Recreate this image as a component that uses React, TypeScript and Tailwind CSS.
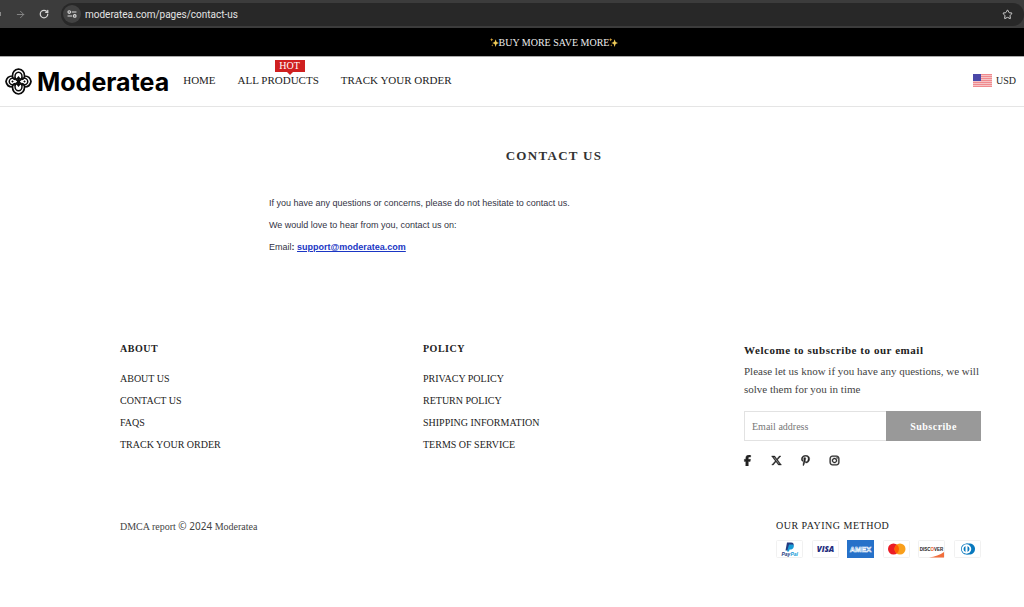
import React from 'react';
import { ArrowRight, RotateCw, Star } from 'lucide-react';
import { FaFacebookF, FaInstagram, FaPinterestP, FaXTwitter } from 'react-icons/fa6';

const aboutLinks = ['ABOUT US', 'CONTACT US', 'FAQS', 'TRACK YOUR ORDER'];
const policyLinks = ['PRIVACY POLICY', 'RETURN POLICY', 'SHIPPING INFORMATION', 'TERMS OF SERVICE'];

const socials = [
  { name: 'Facebook', icon: FaFacebookF },
  { name: 'X', icon: FaXTwitter },
  { name: 'Pinterest', icon: FaPinterestP },
  { name: 'Instagram', icon: FaInstagram },
];

const Sparkles = () => (
  <svg viewBox="0 0 16 16" className="h-[9px] w-[9px]" aria-hidden="true">
    <path d="M10 2l1.800 5L16 9l-4.200 1.800L10 16l-1.800-5.200L4 9l4.200-2z" fill="#f0cc58" />
    <path d="M3 0l.9 2.100L6 3l-2.100.9L3 6l-.9-2.100L0 3l2.100-.9z" fill="#e0a93b" />
    <path d="M4 11l.5 1.500L6 13l-1.500.5L4 15l-.5-1.500L2 13l1.500-.5z" fill="#e0a93b" />
  </svg>
);

const KnotLogo = () => (
  <svg viewBox="0 0 54 54" className="h-[27px] w-[27px]" fill="none" stroke="#0a0a0a" aria-hidden="true">
    <path
      d="M15 16C15 8 20 3 27 2c7 1 12 6 12 14 8 0 12 5 13 11-1 6-5 11-13 11 0 8-5 13-12 14-7-1-12-6-12-14C7 38 3 33 2 27c1-6 5-11 13-11z"
      strokeWidth="3.400"
    />
    <ellipse cx="27" cy="17" rx="7" ry="8.500" strokeWidth="3" />
    <ellipse cx="27" cy="37" rx="7" ry="8.500" strokeWidth="3" />
    <ellipse cx="17" cy="27" rx="8.500" ry="7" strokeWidth="3" />
    <ellipse cx="37" cy="27" rx="8.500" ry="7" strokeWidth="3" />
    <path d="M15 16c0 5 2 7 6 7M39 16c0 5-2 7-6 7M15 38c0-5 2-7 6-7M39 38c0-5-2-7-6-7M27 17v20M24 22l3-4 3 4M24 32l3 4 3-4" strokeWidth="2.600" />
    <circle cx="15" cy="27" r="1.500" fill="#0a0a0a" />
    <circle cx="39" cy="27" r="1.500" fill="#0a0a0a" />
  </svg>
);

const UsFlag = () => (
  <svg viewBox="0 0 19 13" className="h-[13px] w-[19px]" aria-hidden="true">
    <rect width="19" height="13" fill="#f6c4c6" />
    {[0, 2, 4, 6, 8, 10, 12].map((y) => (
      <rect key={y} y={y} width="19" height="1" fill="#f08a8e" />
    ))}
    <rect width="8" height="7" fill="#4a48a8" />
  </svg>
);

const BrowserBar = () => (
  <div className="flex h-7 items-center bg-[#3c3c3c] font-[Roboto,sans-serif]">
    <span className="h-1 w-px bg-[#8a8a8a]" />
    <button aria-label="Forward" className="ml-3.5 text-[#8a8a8a]">
      <ArrowRight size={11} strokeWidth={2} />
    </button>
    <button aria-label="Reload" className="ml-[13px] text-[#d5d5d5]">
      <RotateCw size={10} strokeWidth={3} />
    </button>
    <div className="ml-3 flex h-[23px] flex-1 items-center rounded-full bg-[#282828] pr-[11px] pl-0.5">
      <button aria-label="Site information" className="flex h-[18px] w-[18px] items-center justify-center rounded-full bg-[#424242]">
        <svg viewBox="0 0 18 14" className="h-[8px] w-[10px]" fill="none" stroke="#dedede" strokeWidth="2" aria-hidden="true">
          <circle cx="4" cy="3.500" r="2.300" />
          <path d="M8.500 3.500H17M1 10.500h8.500" />
          <circle cx="14" cy="10.500" r="2.300" />
        </svg>
      </button>
      <input
        aria-label="Address"
        defaultValue="moderatea.com/pages/contact-us"
        className="ml-1 min-w-0 flex-1 bg-transparent text-[10px] text-[#e3e3e3] outline-none"
      />
      <button aria-label="Bookmark" className="text-[#dedede]">
        <Star size={11} strokeWidth={2} />
      </button>
    </div>
  </div>
);

const Header = () => (
  <header className="flex h-[50px] items-center border-b border-[#e5e5e5] pr-2 pl-[5px] text-[11px] text-[#1c1c1c]">
    <a href="#" className="flex items-center gap-[5px]">
      <KnotLogo />
      <span className="font-[Inter,sans-serif] text-[25px] leading-8 font-bold text-black">Moderatea</span>
    </a>
    <nav className="ml-3.5 flex gap-[22px] pb-1 leading-4">
      <a href="#">HOME</a>
      <a href="#" className="relative">
        ALL PRODUCTS
        <span className="absolute -top-3 left-[37px] h-3 w-[30px] bg-[#cf2020] text-center text-[10px] leading-3 text-white">
          HOT
          <span className="absolute top-3 left-3 border-x-3 border-t-3 border-x-transparent border-t-[#cf2020]" />
        </span>
      </a>
      <a href="#">TRACK YOUR ORDER</a>
    </nav>
    <button className="ml-auto flex items-center gap-1 pb-0.5 text-[10px]">
      <UsFlag />
      USD
    </button>
  </header>
);

const LinkColumn = ({ title, links }: { title: string; links: string[] }) => (
  <div>
    <h2 className="text-[10px] leading-4 font-bold tracking-wider">{title}</h2>
    <ul className="mt-[11px] text-[10px] leading-[22px]">
      {links.map((link) => (
        <li key={link}>
          <a href="#">{link}</a>
        </li>
      ))}
    </ul>
  </div>
);

const PayCard = ({ label, children }: { label: string; children: React.ReactNode }) => (
  <svg viewBox="0 0 54 36" role="img" aria-label={label} className="h-[18px] w-[27px]">
    <rect x="1" y="1" width="52" height="34" rx="2" fill="#fff" stroke="#f1f1f1" strokeWidth="2" />
    {children}
  </svg>
);

const PaymentCards = () => (
  <div className="mt-1.5 flex justify-between">
    <PayCard label="PayPal">
      <path d="M22 5h8c5 0 6 3 5 6s-3 5-7 5h-3l-1 5h-5z" fill="#253b80" />
      <path d="M26 9h7c3 1 3 4 2 6-1 3-4 4-6 4h-2l-1 4h-4z" fill="#179bd7" />
      <text x="11" y="32" fontFamily="Liberation Sans, sans-serif" fontSize="10" fontWeight="bold" fontStyle="italic" fill="#253b80">
        Pay<tspan fill="#179bd7">Pal</tspan>
      </text>
    </PayCard>
    <PayCard label="Visa">
      <text x="27" y="24" textAnchor="middle" fontFamily="Open Sans, sans-serif" fontSize="16" fontWeight="800" fontStyle="italic" fill="#232c7c">VISA</text>
    </PayCard>
    <PayCard label="American Express">
      <rect width="54" height="36" fill="#2671c9" />
      <text x="27" y="23" textAnchor="middle" fontFamily="Liberation Sans, sans-serif" fontSize="15" fontWeight="bold" fill="#2671c9" stroke="#fff" strokeWidth="1.200">AMEX</text>
    </PayCard>
    <PayCard label="Mastercard">
      <circle cx="21" cy="18" r="11" fill="#eb1c26" />
      <circle cx="34" cy="18" r="11" fill="#f99f1b" />
      <path d="M27.500 9.100a11 11 0 0 1 0 17.800 11 11 0 0 1 0-17.800z" fill="#ff5f00" />
    </PayCard>
    <PayCard label="Discover">
      <path d="M52 24v11H22c12-2 22-5 30-11z" fill="#f26e3c" />
      <text x="27" y="21" textAnchor="middle" fontFamily="Liberation Sans, sans-serif" fontSize="9" fontWeight="bold" fill="#222">
        DISC<tspan fill="#ee5a24">O</tspan>VER
      </text>
    </PayCard>
    <PayCard label="Diners Club">
      <path d="M25 7h5c7 0 12 4 12 11s-5 11-12 11h-5z" fill="#0879be" />
      <circle cx="25" cy="18" r="11" fill="#0879be" />
      <circle cx="25" cy="18" r="9.500" fill="#fff" />
      <path d="M23 12a6.500 6.500 0 0 0 0 12zM27 12a6.500 6.500 0 0 1 0 12z" fill="#0879be" />
    </PayCard>
  </div>
);

const Subscribe = () => (
  <div className="pt-px">
    <h2 className="text-[11px] leading-4 font-bold tracking-wider whitespace-nowrap">Welcome to subscribe to our email</h2>
    <p className="mt-1 text-[11px] leading-[18px] text-[#444]">
      Please let us know if you have any questions, we will solve them for you in time
    </p>
    <form className="mt-[13px] flex h-[30px]" onSubmit={(e) => e.preventDefault()}>
      <input
        type="email"
        aria-label="Email address"
        placeholder="Email address"
        className="min-w-0 flex-1 border border-r-0 border-[#e2e2e2] px-[7px] text-[10px] outline-none placeholder:text-[#777]"
      />
      <button className="w-[95px] bg-[#999] text-[10px] font-bold tracking-wider text-white">Subscribe</button>
    </form>
    <div className="mt-[14px] flex gap-[17px]">
      {socials.map(({ name, icon: Icon }) => (
        <a key={name} href="#" aria-label={name} className="flex w-3 justify-center first:-ml-[3px]">
          <Icon size={11} className="stroke-current stroke-[20]" />
        </a>
      ))}
    </div>
  </div>
);

const Footer = () => (
  <footer className="pt-[87px] pr-[43px] pb-10 pl-[120px] text-[#222]">
    <div className="grid grid-cols-[303fr_321fr_237fr]">
      <LinkColumn title="ABOUT" links={aboutLinks} />
      <LinkColumn title="POLICY" links={policyLinks} />
      <Subscribe />
    </div>
    <div className="mt-[52px] flex items-start justify-between">
      <p className="text-[10px] leading-4 text-[#444]">
        DMCA report <span className="font-['Noto_Sans',sans-serif]">© 2024</span> Moderatea
      </p>
      <div className="w-[205px]">
        <h2 className="text-[10px] leading-4 tracking-wider">OUR PAYING METHOD</h2>
        <PaymentCards />
      </div>
    </div>
  </footer>
);

const App = () => {
  return (
    <div className="min-h-screen bg-white font-['Liberation_Serif',serif]">
      <BrowserBar />
      <div className="flex h-[29px] items-center justify-center border-b border-[#aaa] bg-black pl-[84px] text-[10px] text-[#eee]">
        <Sparkles />
        <span>BUY MORE SAVE MORE</span>
        <Sparkles />
      </div>
      <Header />
      <main className="pt-[39px] pl-[84px]">
        <h1 className="text-center text-[13px] leading-5 font-bold tracking-widest text-[#333]">CONTACT US</h1>
        <div className="mx-auto mt-[30px] flex w-[570px] flex-col gap-2 font-['Liberation_Sans',sans-serif] text-[9px] leading-[14px] text-[#333344]">
          <p>If you have any questions or concerns, please do not hesitate to contact us.</p>
          <p>We would love to hear from you, contact us on:</p>
          <p>
            Email<b>:</b>{' '}
            <a href="mailto:support@moderatea.com" className="font-bold text-[#1a36c4] underline">support@moderatea.com</a>
          </p>
        </div>
      </main>
      <Footer />
    </div>
  );
};

export default App;
